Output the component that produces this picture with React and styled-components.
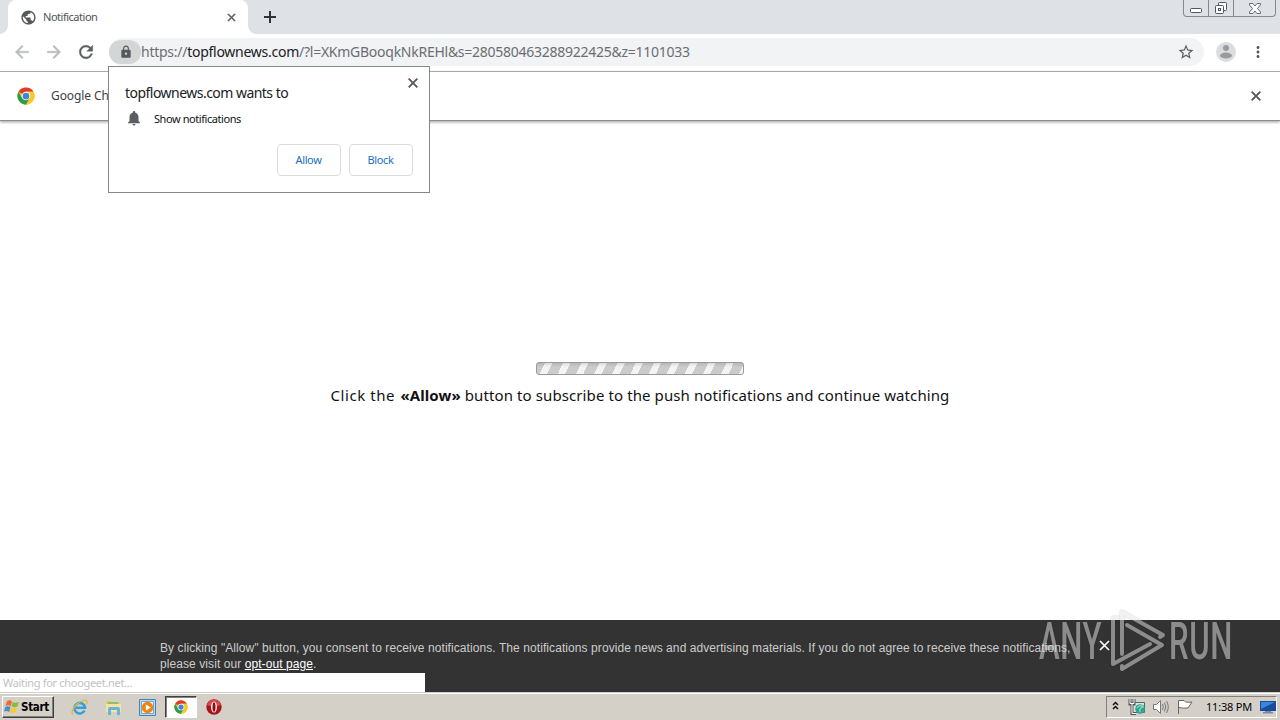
import styled, { createGlobalStyle } from 'styled-components';
import {
  MdArrowBack,
  MdArrowForward,
  MdClose,
  MdLock,
  MdMoreVert,
  MdNotifications,
  MdPublic,
  MdRefresh,
  MdStarBorder,
} from 'react-icons/md';

const GlobalStyle = createGlobalStyle`
  * {
    box-sizing: border-box;
  }

  body {
    margin: 0;
    background: #fff;
    font-family: 'Noto Sans', 'Open Sans', sans-serif;
    overflow: hidden;
  }
`;

const Screen = styled.div`
  position: relative;
  display: flex;
  flex-direction: column;
  width: 1280px;
  height: 720px;
  overflow: hidden;
  background: #fff;
`;

const Label = styled.span`
  font-size: ${({ $size }) => $size || 11}px;
  letter-spacing: ${({ $spacing }) => $spacing || 0}px;
  color: ${({ $color }) => $color || '#202124'};
  white-space: nowrap;
`;

const CloseIcon = styled(MdClose)`
  color: #5a5d61;

  path:not([fill='none']) {
    stroke: currentColor;
    stroke-width: 1px;
  }
`;

const TabStrip = styled.div`
  display: flex;
  align-items: flex-start;
  height: 34px;
  padding-left: 8px;
  background: #dee1e6;
`;

const Tab = styled.div`
  position: relative;
  display: flex;
  align-items: center;
  width: 240px;
  height: 34px;
  padding: 0 10px 0 12px;
  background: #fff;
  border-radius: 8px 8px 0 0;

  &::before,
  &::after {
    content: '';
    position: absolute;
    bottom: 0;
    width: 8px;
    height: 8px;
  }

  &::before {
    left: -8px;
    background: radial-gradient(circle at 0 0, transparent 7.5px, #fff 8px);
  }

  &::after {
    right: -8px;
    background: radial-gradient(circle at 100% 0, transparent 7.5px, #fff 8px);
  }
`;

const TabTitle = styled(Label)`
  flex: 1;
  margin: -2px 0 0 6px;
`;

const NewTab = styled.svg`
  margin: 11px 0 0 16px;
`;

const WindowButtons = styled.div`
  display: flex;
  width: 93px;
  height: 17px;
  margin: 0 4px 0 auto;
  border: 1px solid #85888d;
  border-top: 0;
  border-radius: 0 0 4px 4px;
`;

const WindowButton = styled.div`
  display: grid;
  place-items: center;
  width: ${({ $width }) => $width}px;
  border-left: ${({ $first }) => ($first ? 0 : '1px solid #85888d')};
`;

const Toolbar = styled.div`
  display: flex;
  align-items: center;
  height: 38px;
  padding: 0 12px 2px;
  border-bottom: 1px solid #b2b4b6;
  color: #5a5d61;
`;

const NavIcons = styled.div`
  display: flex;
  gap: 12px;
  width: 97px;

  path:not([fill='none']) {
    stroke: currentColor;
    stroke-width: 0.5px;
  }

  svg:nth-child(-n + 2) {
    color: #b9bbbd;
  }
`;

const Omnibox = styled.div`
  display: flex;
  align-items: center;
  width: 1095px;
  height: 28px;
  padding-right: 9px;
  background: #f1f3f4;
  border-radius: 14px;
`;

const LockPill = styled.div`
  display: grid;
  place-items: center;
  width: 32px;
  height: 24px;
  border-radius: 12px;
  background: #d3d5d7;
  padding-left: 2px;
`;

const Url = styled(Label)`
  flex: 1;

  b {
    font-weight: 400;
    color: #202124;
  }
`;

const Avatar = styled.svg`
  flex: none;
  margin: 0 13px 0 12px;
`;

const MenuDots = styled(MdMoreVert)`
  flex: none;
`;

const InfoBar = styled.div`
  display: flex;
  align-items: center;
  height: 49px;
  padding: 0 16px 1px 17px;
  border-bottom: 1px solid #8c8c8c;
  box-shadow: 0 1px 3px rgba(0, 0, 0, 0.4);
`;

const InfoText = styled(Label)`
  margin: 0 auto 0 16px;
`;

const Page = styled.main`
  display: flex;
  flex: 1;
  flex-direction: column;
  align-items: center;
  padding-top: 241px;
`;

const Progress = styled.div`
  width: 208px;
  height: 13px;
  border: 1px solid #9a9a9a;
  border-radius: 3px;
  background:
    linear-gradient(rgba(0, 0, 0, 0.1), transparent 35%),
    repeating-linear-gradient(116deg, #cbcbcb 0 7.2px, #f4f4f4 7.2px 13.8px, #cbcbcb 13.8px 16.3px);
`;

const Message = styled.p`
  margin: 8px 0 0;
  font-size: 15px;
  line-height: 24px;
  letter-spacing: 0.1px;
  color: #111;
  white-space: nowrap;

  span {
    letter-spacing: 0.55px;
  }

  b {
    margin-left: 1px;
    letter-spacing: 0.1px;
  }
`;

const ConsentBar = styled.footer`
  display: flex;
  flex-direction: column;
  height: 72px;
  padding-top: 20px;
  background: #333;
`;

const ConsentBody = styled.div`
  display: flex;
  align-items: flex-start;
  height: 33px;
  padding-left: 160px;
  font: 12px/16px 'Liberation Sans', Arial, sans-serif;
  letter-spacing: 0.078px;
  color: #ccc;

  p {
    width: 939px;
    margin: 0;
    white-space: nowrap;
  }

  u {
    color: #fff;
  }
`;

const StatusBubble = styled.div`
  display: flex;
  align-items: center;
  width: 425px;
  height: 19px;
  padding-left: 3px;
  background: #fff;
`;

const Taskbar = styled.div`
  display: flex;
  align-items: center;
  height: 28px;
  padding: 2px 3px 0 2px;
  background: #d4d0c8;
  box-shadow: inset 0 1px #d4d0c8, inset 0 2px #fff;
`;

const StartButton = styled.div`
  display: flex;
  align-items: center;
  gap: 1px;
  width: 52px;
  height: 22px;
  padding-left: 1px;
  border: 1px solid;
  border-color: #fff #404040 #404040 #fff;
  box-shadow: inset -1px -1px #808080;
  font: bold 11.5px 'DejaVu Sans Condensed', 'DejaVu Sans', sans-serif;
  letter-spacing: -0.3px;
`;

const QuickLaunch = styled.div`
  display: flex;
  align-items: center;
  margin-left: 8px;
`;

const TaskItem = styled.div`
  display: grid;
  place-items: center;
  width: ${({ $active }) => ($active ? 32 : 34)}px;
  height: 22px;
  margin-left: ${({ $active }) => ($active ? 1 : 0)}px;
  border: 1px solid;
  border-color: ${({ $active }) => ($active ? '#404040 #fff #fff #404040' : 'transparent')};
  background: ${({ $active }) => ($active ? '#fff' : 'transparent')};
  box-shadow: ${({ $active }) => ($active ? 'inset 1px 1px #808080' : 'none')};
`;

const Tray = styled.div`
  display: flex;
  align-items: center;
  justify-content: flex-end;
  width: 171px;
  height: 22px;
  margin-left: auto;
  border: 1px solid;
  border-color: #808080 #fff #fff #808080;

  svg {
    flex: none;
  }
`;

const Clock = styled(Label)`
  width: 46px;
  margin: -1px 8px 0 12px;
`;

const Popup = styled.div`
  position: absolute;
  top: 66px;
  left: 108px;
  width: 322px;
  height: 127px;
  padding: 15px 16px 16px;
  border: 1px solid #85888a;
  background: #fff;
`;

const PopupClose = styled(CloseIcon)`
  position: absolute;
  top: 8px;
  right: 8px;
`;

const PopupTitle = styled.div`
  display: flex;
  align-items: center;
  height: 20px;
`;

const Permission = styled.div`
  display: flex;
  align-items: center;
  gap: 11px;
  height: 32px;
  color: #5a5d61;
`;

const Actions = styled.div`
  display: flex;
  justify-content: flex-end;
  gap: 8px;
  margin-top: 10px;
`;

const ActionButton = styled.button`
  width: 64px;
  height: 32px;
  padding: 0 1px 2px 0;
  border: 1px solid #dadce0;
  border-radius: 4px;
  background: #fff;
  font: 11px 'Noto Sans', sans-serif;
  letter-spacing: -0.35px;
  color: #1a6fbf;
`;

const Watermark = styled.div`
  position: absolute;
  top: 606px;
  left: 1039px;
  display: flex;
  align-items: flex-start;
  width: 194px;
  height: 70px;
  opacity: 0.5;
  filter: drop-shadow(0 0 1px rgba(0, 0, 0, 0.35));
`;

const WatermarkWord = styled.span`
  width: ${({ $width }) => $width}px;
  font: 500 52px/72px Roboto, sans-serif;
  letter-spacing: 1px;
  color: #e4e4e4;
  transform: scaleX(0.6);
  transform-origin: 0 0;
  white-space: nowrap;
`;

function ChromeLogo({ size }) {
  return (
    <svg width={size} height={size} viewBox="0 0 48 48">
      <circle cx="24" cy="24" r="23" fill="#fbc926" />
      <path d="M24 24 4.1 12.5A23 23 0 0 1 43.9 12.5H24Z" fill="#de3b2d" />
      <path d="M4.1 12.5A23 23 0 0 0 24 47L34 30 24 24 14 30Z" fill="#2a9c4b" />
      <path d="M43.9 12.5A23 23 0 0 1 24 47L34 30 34 17 24 12.5Z" fill="#fbc926" />
      <circle cx="24" cy="24" r="11.5" fill="#fff" />
      <circle cx="24" cy="24" r="9" fill="#4285d8" />
    </svg>
  );
}

function WindowsFlag() {
  return (
    <svg width="16" height="16" viewBox="0 0 16 16">
      <path d="M3 2Q6 .5 8 2.5L6.8 7Q4 5.5 1.5 7Z" fill="#ed6b31" />
      <path d="M8.7 3Q11.5 4.5 15 3L13.5 7.5Q10 9 7.5 7.3Z" fill="#8cba3d" />
      <path d="M1.2 8Q4 6.5 6.5 8L5.2 13Q3 11.5 0 12.5Z" fill="#4a8dd2" />
      <path d="M7.2 8.5Q10 10 13.2 8.5L12 13Q8.5 15 5.9 13.3Z" fill="#fac832" />
    </svg>
  );
}

function ExplorerLogo() {
  return (
    <svg width="17" height="17" viewBox="0 0 17 17" fill="none">
      <path d="M13.5 11.5A5.3 5.3 0 1 1 14 8.8H5" stroke="#36a0dc" strokeWidth="2.6" />
      <path d="M2 15.5C-1 13 4 5 10 2.5S17 2 15.3 5" stroke="#e4b73b" strokeWidth="1.3" />
    </svg>
  );
}

function FolderLogo() {
  return (
    <svg width="17" height="17" viewBox="0 0 17 17">
      <path d="M1 2H6L7 3.5H15V13H1Z" fill="#e8c660" />
      <path d="M1 5H16V13H1Z" fill="#f5e59a" />
      <path d="M3 3H13V5H3Z" fill="#8dbd71" />
      <path d="M3 16V10Q3 8 5 8H13Q15 8 15 10V16H12V11H6V16Z" fill="#68b4df" />
    </svg>
  );
}

function MediaLogo() {
  return (
    <svg width="17" height="17" viewBox="0 0 17 17">
      <path d="M.5.5H16.5V16.5H.5Z" fill="#b9d9f2" stroke="#4784bd" />
      <path d="M2.5 2.5H14.5V14.5H2.5Z" fill="#eaf3fa" stroke="#72a8d4" />
      <circle cx="8.5" cy="8.5" r="5.7" fill="#f0850e" />
      <path d="M6.8 5.5 12 8.5 6.8 11.5Z" fill="#fff" />
    </svg>
  );
}

function OperaLogo() {
  return (
    <svg width="16" height="16" viewBox="0 0 16 16">
      <circle cx="8" cy="8" r="7.7" fill="#a9161a" />
      <path d="M1 6A7.3 7.3 0 0 1 15 6Q8 9 1 6Z" fill="#d64949" />
      <ellipse cx="8" cy="8" rx="3" ry="5.5" fill="#eee" />
      <ellipse cx="8" cy="8" rx="1.5" ry="4.7" fill="#8e1014" />
    </svg>
  );
}

function TrayIcons() {
  return (
    <svg width="82" height="18" viewBox="0 0 82 18" fill="none">
      <path d="M1 7 3.5 4.5 6 7M1 11 3.5 8.5 6 11" stroke="#111" strokeWidth="1.5" />
      <path d="M20.5 4.5H32.5V14.5H20.5Z" fill="#d9e5e2" stroke="#477067" />
      <path d="M18 1V6H22V1M20 6V15.5H24" stroke="#555" strokeWidth="3" />
      <path d="M18 1V5.5H22V1M20 6V15.5H24" stroke="#fff" strokeWidth="1" />
      <circle cx="28" cy="11" r="4.8" fill="#33a491" />
      <path d="M25 10Q28 6 31 9Q27 10 28 14" stroke="#9cddcf" strokeWidth="1.2" />
      <path d="M41.5 6.5H44.5L48.5 2.5V15.5L44.5 11.5H41.5Z" fill="#fff" stroke="#777" />
      <path d="M50.5 6Q52 9 50.5 12M52.5 4.5Q55 9 52.5 13.5M54.5 3Q58 9 54.5 15" stroke="#777" />
      <path d="M66.5 16V2.5H72Q73 5 80 4L76 10Q71 10.5 67 9.5" fill="#fff" stroke="#666" />
    </svg>
  );
}

function MonitorIcon() {
  return (
    <svg width="16" height="14" viewBox="0 0 16 14">
      <path d="M0 1H16V11H0Z" fill="#194c9d" />
      <path d="M1 2H15L1 9Z" fill="#3c86da" />
      <path d="M5 11H11V12H13V13.5H3V12H5Z" fill="#748ba5" />
    </svg>
  );
}

function BrowserChrome() {
  return (
    <>
      <TabStrip>
        <Tab>
          <MdPublic size={17} color="#55585c" />
          <TabTitle $color="#505357" $spacing={-0.48}>Notification</TabTitle>
          <CloseIcon size={13} />
        </Tab>
        <NewTab width="12" height="12" viewBox="0 0 12 12">
          <path d="M6 0V12M0 6H12" stroke="#303238" strokeWidth="2" />
        </NewTab>
        <WindowButtons>
          <WindowButton $first $width={24}>
            <svg width="12" height="16" viewBox="0 0 12 16">
              <rect x=".5" y="8.5" width="11" height="4" rx="1" fill="#fff" stroke="#53565e" />
            </svg>
          </WindowButton>
          <WindowButton $width={25}>
            <svg width="14" height="16" viewBox="0 0 14 16" fill="#fff" stroke="#53565e">
              <rect x="4.5" y="2.5" width="8" height="8" rx="1" />
              <rect x="1.5" y="5.5" width="8" height="8" rx="1" />
              <rect x="4.5" y="8.5" width="2" height="2" />
            </svg>
          </WindowButton>
          <WindowButton $width={42}>
            <svg width="12" height="14" viewBox="0 0 12 14">
              <path d="M.5 2.5H4L6 5 8 2.5H11.5V4L8.5 7.5 11.5 11V12.5H8L6 10 4 12.5H.5V11L3.5 7.5.5 4Z" fill="#fff" stroke="#6a6d75" />
            </svg>
          </WindowButton>
        </WindowButtons>
      </TabStrip>
      <Toolbar>
        <NavIcons>
          <MdArrowBack size={20} />
          <MdArrowForward size={20} />
          <MdRefresh size={20} />
        </NavIcons>
        <Omnibox>
          <LockPill>
            <MdLock size={14} color="#55585c" />
          </LockPill>
          <Url $size={14} $spacing={-0.26} $color="#6a6e73">
            https://<b>topflownews.com</b>/?l=XKmGBooqkNkREHl&amp;s=280580463288922425&amp;z=1101033
          </Url>
          <MdStarBorder size={18} />
        </Omnibox>
        <Avatar width="20" height="20" viewBox="0 0 20 20">
          <circle cx="10" cy="10" r="10" fill="#dcdddf" />
          <circle cx="10" cy="6" r="3" fill="#999b9e" />
          <ellipse cx="10" cy="13.5" rx="6" ry="3" fill="#999b9e" />
        </Avatar>
        <MenuDots size={18} />
      </Toolbar>
      <InfoBar>
        <ChromeLogo size={18} />
        <InfoText $size={12} $spacing={-0.1} $color="#3c4043">Google Ch</InfoText>
        <CloseIcon size={16} />
      </InfoBar>
    </>
  );
}

function PermissionPopup() {
  return (
    <Popup>
      <PopupClose size={16} />
      <PopupTitle>
        <Label $size={14} $spacing={-0.53}>topflownews.com wants to</Label>
      </PopupTitle>
      <Permission>
        <MdNotifications size={18} />
        <Label $spacing={-0.43} $color="#111">Show notifications</Label>
      </Permission>
      <Actions>
        <ActionButton>Allow</ActionButton>
        <ActionButton>Block</ActionButton>
      </Actions>
    </Popup>
  );
}

export default function App() {
  return (
    <Screen>
      <GlobalStyle />
      <BrowserChrome />
      <Page>
        <Progress />
        <Message>
          <span>Click the </span>
          <b>«Allow»</b> button to subscribe to the push notifications and continue watching
        </Message>
      </Page>
      <ConsentBar>
        <ConsentBody>
          <p>
            By clicking "Allow" button, you consent to receive notifications. The notifications provide news and advertising materials. If you do not agree to receive these notifications,
            <br />
            please visit our <u>opt-out page</u>.
          </p>
          <svg width="11" height="11" viewBox="0 0 11 11">
            <path d="M1 1 10 10M10 1 1 10" stroke="#fff" strokeWidth="1.7" />
          </svg>
        </ConsentBody>
        <StatusBubble>
          <Label $color="#c2c2c2" $spacing={-0.31}>Waiting for choogeet.net...</Label>
        </StatusBubble>
      </ConsentBar>
      <Taskbar>
        <StartButton>
          <WindowsFlag />
          Start
        </StartButton>
        <QuickLaunch>
          <TaskItem><ExplorerLogo /></TaskItem>
          <TaskItem><FolderLogo /></TaskItem>
          <TaskItem><MediaLogo /></TaskItem>
          <TaskItem $active><ChromeLogo size={14} /></TaskItem>
          <TaskItem><OperaLogo /></TaskItem>
        </QuickLaunch>
        <Tray>
          <TrayIcons />
          <Clock $spacing={-0.2} $color="#000">11:38 PM</Clock>
          <MonitorIcon />
        </Tray>
      </Taskbar>
      <PermissionPopup />
      <Watermark>
        <WatermarkWord $width={67}>ANY</WatermarkWord>
        <svg width="63" height="70" viewBox="0 0 63 70" fill="none" stroke="#e4e4e4" strokeWidth="4" strokeLinejoin="round" strokeLinecap="round">
          <path d="M12 12H7V58L44 38" />
          <path d="M16 48V6L57 29L54 31" />
          <path d="M21 19 56 39 16 63V60" />
        </svg>
        <WatermarkWord $width={62}>RUN</WatermarkWord>
      </Watermark>
    </Screen>
  );
}
